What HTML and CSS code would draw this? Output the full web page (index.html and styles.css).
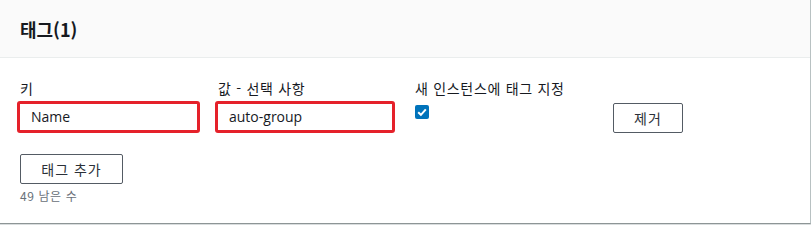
FILE: index.html
```html
<!DOCTYPE html>
<html lang="ko">
<head>
<meta charset="utf-8">
<link rel="stylesheet" href="styles.css">
</head>
<body>
<div class="panel">
  <div class="panel-header">
    <h2 class="title">태그(1)</h2>
  </div>
  <div class="panel-body">
    <div class="tag-row">
      <div class="col col-key">
        <label class="field-label">키</label>
        <div class="input hl">Name</div>
      </div>
      <div class="col col-value">
        <label class="field-label">값 - 선택 사항</label>
        <div class="input hl">auto-group</div>
      </div>
      <div class="col col-check">
        <label class="field-label">새 인스턴스에 태그 지정</label>
        <span class="checkbox">
          <svg viewBox="0 0 14 14" width="14" height="14"><rect x="0" y="0" width="14" height="14" rx="2" fill="#0073bb"/><path d="M3.2 7.2 L5.9 9.8 L10.8 4.3" fill="none" stroke="#fff" stroke-width="2"/></svg>
        </span>
      </div>
      <div class="col col-remove">
        <button class="btn btn-remove">제거</button>
      </div>
    </div>
    <button class="btn btn-add">태그 추가</button>
    <div class="hint">49 남은 수</div>
  </div>
</div>
</body>
</html>
```

FILE: styles.css
```css
html, body {
  margin: 0;
  padding: 0;
  background: #ffffff;
}
body {
  font-family: "Open Sans", "Noto Sans CJK KR", sans-serif;
  color: #16191f;
  width: 811px;
  height: 225px;
  overflow: hidden;
}
.panel {
  width: 810px;
  height: 223px;
  border-right: 1px solid #b8c1c2;
  border-bottom: 1px solid #8d9596;
  box-shadow: 0 1px 1px 0 rgba(0, 28, 36, 0.15);
  background: #fff;
}
.panel-header {
  height: 57px;
  background: #fafafa;
  border-bottom: 1px solid #eaeded;
  display: flex;
  align-items: center;
  padding-left: 20px;
}
.title {
  margin: 0;
  font-size: 18px;
  font-weight: 700;
  line-height: 22px;
  color: #16191f;
  font-family: "Noto Sans CJK KR", sans-serif;
}
.panel-body {
  padding: 19px 20px 0 20px;
}
.tag-row {
  display: flex;
  align-items: flex-start;
}
.col {
  display: flex;
  flex-direction: column;
}
.col-key { width: 177px; margin-right: 21px; }
.col-value { width: 174px; margin-right: 23px; }
.col-check { width: 198px; }
.col-remove { padding-top: 26px; }
.field-label {
  font-family: "Noto Sans CJK KR", sans-serif;
  font-size: 14px;
  line-height: 22px;
  letter-spacing: 0.7px;
  color: #16191f;
  height: 22px;
  margin-bottom: 2px;
}
.input {
  box-sizing: border-box;
  height: 32px;
  margin-left: -3px;
  margin-right: -3px;
  padding-left: 11px;
  font-size: 14px;
  line-height: 26px;
  color: #16191f;
  background: #fff;
  border-radius: 3px;
}
.input.hl {
  border: 3px solid #e5212a;
}
.checkbox {
  display: block;
  width: 14px;
  height: 14px;
  margin-top: 4px;
}
.checkbox svg { display: block; }
.btn {
  box-sizing: border-box;
  background: #fff;
  border: 1px solid #545b64;
  border-radius: 2px;
  font-family: "Noto Sans CJK KR", sans-serif;
  font-size: 14px;
  letter-spacing: 1px;
  color: #2b3038;
  height: 30px;
  padding: 0;
  cursor: pointer;
}
.btn-remove {
  width: 70px;
}
.btn-add {
  display: block;
  width: 103px;
  margin-top: 21px;
}
.hint {
  font-family: "Noto Sans CJK KR", sans-serif;
  font-size: 12px;
  line-height: 16px;
  letter-spacing: 0.6px;
  color: #687078;
  margin-top: 4px;
}
```
